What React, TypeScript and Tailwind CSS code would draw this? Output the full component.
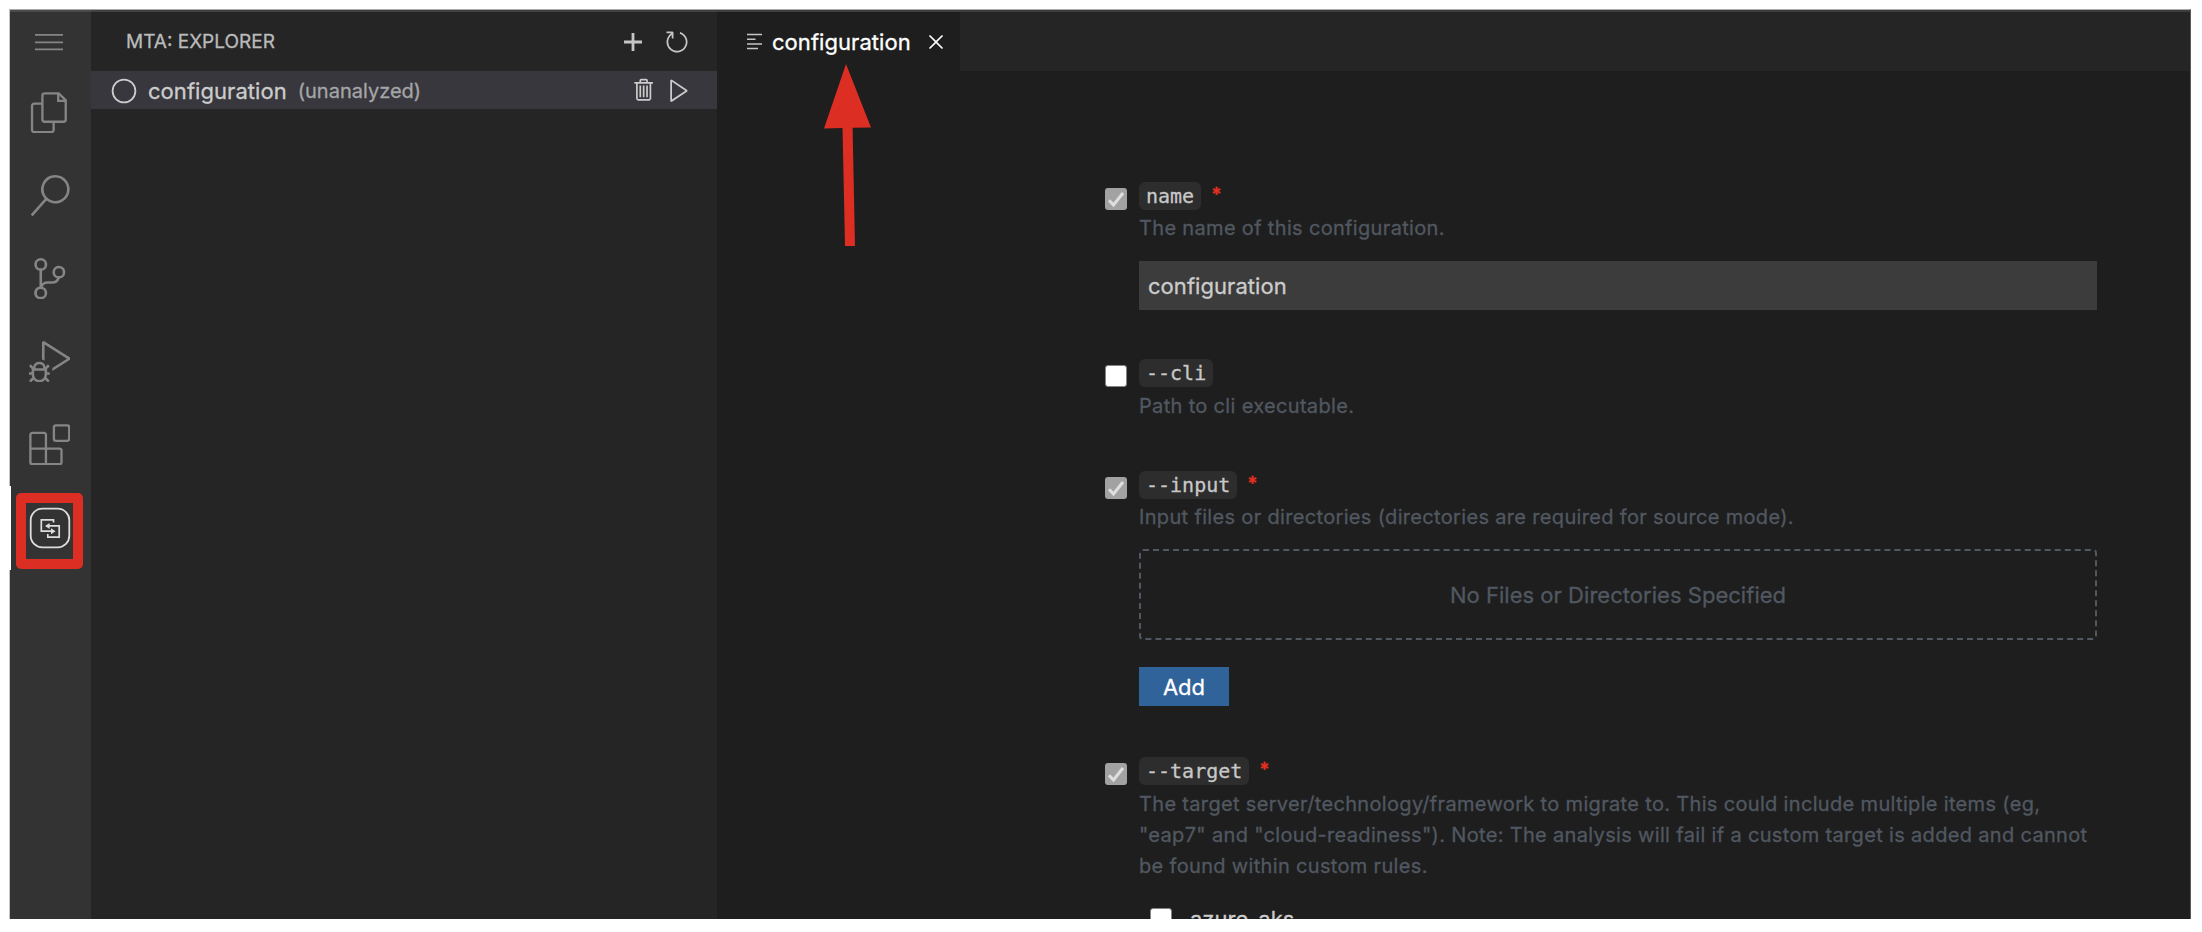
import { ReactNode } from "react";
import { VscClose, VscDebugAlt, VscPlay, VscRefresh, VscSearch, VscSourceControl, VscTrash } from "react-icons/vsc";

function ActivityItem({ children }: { children: ReactNode }) {
  return <div className="flex h-[83px] w-[79px] shrink-0 items-center justify-center text-[#858585]">{children}</div>;
}

function FilesIcon() {
  return (
    <svg className="size-[41.5px]" viewBox="0 0 24 24" fill="none" stroke="currentColor" strokeWidth="1.35">
      <path d="M9 .75H17.2L21.25 4.8V15.9a1.3 1.3 0 0 1-1.3 1.3H9.05a1.3 1.3 0 0 1-1.3-1.3V2.05A1.3 1.3 0 0 1 9.05.75z" />
      <path d="M16.9.75v4.4h4.4" />
      <path d="M7.5 6.75H3.05a1.3 1.3 0 0 0-1.3 1.3V21.95a1.3 1.3 0 0 0 1.3 1.3h9.9a1.3 1.3 0 0 0 1.3-1.3V17.5" />
    </svg>
  );
}

function ExtensionsIcon() {
  return (
    <svg className="size-[41.5px]" viewBox="0 0 24 24" fill="none" stroke="currentColor" strokeWidth="1.35">
      <rect x="14.4" y=".75" width="8.85" height="9" rx="1.2" />
      <path d="M1.9 5.15H8.7a1.1 1.1 0 0 1 1.1 1.1V14.2H17.7a1.1 1.1 0 0 1 1.1 1.1V22.15a1.1 1.1 0 0 1-1.1 1.1H1.9a1.1 1.1 0 0 1-1.1-1.1V6.25a1.1 1.1 0 0 1 1.1-1.1zM.8 14.2H9.8V23.2" />
    </svg>
  );
}

function MtaIcon() {
  return (
    <svg className="size-[42px]" viewBox="0 0 42 42" fill="none" stroke="#dcdcdc">
      <rect x="1.7" y="1.7" width="38.6" height="38.6" rx="11.5" strokeWidth="1.8" />
      <path d="M24.5 15.5V12.8H12.3V24.2H23M19 18.9H30.2V30.2H18.8V27" strokeWidth="1.7" />
      <path d="M16 18.9l4.6-3v6zM26.6 24.2l-4.6-3v6z" fill="#dcdcdc" stroke="none" />
    </svg>
  );
}

function CheckBox({ checked }: { checked?: boolean }) {
  return checked ? (
    <div className="flex size-[22px] shrink-0 items-center justify-center rounded-[3px] bg-[#a2a2a2]">
      <svg className="size-[22px]" viewBox="0 0 22 22" fill="none" stroke="#dfdfdf" strokeWidth="3">
        <path d="M4 12.2L8.5 17 18 5" />
      </svg>
    </div>
  ) : (
    <div className="size-[22px] shrink-0 rounded-[3px] border border-[#858585] bg-white" />
  );
}

function Field({
  label,
  required,
  checked,
  description,
  children,
}: {
  label: string;
  required?: boolean;
  checked?: boolean;
  description: ReactNode;
  children?: ReactNode;
}) {
  return (
    <div className="flex items-start gap-[12px]">
      <div className="pt-[6px]">
        <CheckBox checked={checked} />
      </div>
      <div className="w-[958px]">
        <div className="flex h-[28px] items-start">
          <code className="flex h-[28px] items-center rounded-[6px] bg-[#2d2d2d] px-[7px] font-['DejaVu_Sans_Mono',monospace] text-[20px] leading-[28px] text-[#c8c8c8]">
            {label}
          </code>
          {required && <span className="ml-[10px] text-[19px] leading-[26px] font-semibold text-[#e5301f]">*</span>}
        </div>
        <div className="pt-[3px] text-[20px] leading-[31px] tracking-[0.33px] text-[#515861]">{description}</div>
        {children}
      </div>
    </div>
  );
}

export default function App() {
  return (
    <div className="relative h-[932px] w-[2202px] overflow-hidden bg-white pt-[9px] pl-[9px] font-['Inter',sans-serif] [-webkit-text-stroke:0.3px]">
      <div className="flex h-[910px] w-[2182px] overflow-hidden border-t border-r border-l border-t-[#a9a9a9] border-r-[#5a5a5a] border-l-[#c4c4c4] bg-[#1e1e1e]">
        <nav className="flex w-[81px] shrink-0 flex-col border-t-2 border-[#4a4a4a] bg-[#333333]">
          <div className="flex h-[59px] w-[78px] shrink-0 items-center justify-center">
            <svg className="h-[18px] w-[28px]" viewBox="0 0 28 18" stroke="#858585" strokeWidth="1.7">
              <path d="M0 1.8h28M0 9.3h28M0 16.3h28" />
            </svg>
          </div>
          <ActivityItem><FilesIcon /></ActivityItem>
          <ActivityItem><VscSearch size={41.5} /></ActivityItem>
          <ActivityItem><VscSourceControl size={41.5} /></ActivityItem>
          <ActivityItem><VscDebugAlt size={41.5} /></ActivityItem>
          <ActivityItem><ExtensionsIcon /></ActivityItem>
          <ActivityItem><MtaIcon /></ActivityItem>
        </nav>

        <aside className="w-[626px] shrink-0 border-t-2 border-[#414142] bg-[#252526]">
          <div className="flex h-[59px] items-center pr-[26px] pl-[35px] text-[#bbbbbb]">
            <h2 className="grow pt-[1px] text-[19px] leading-[24px] whitespace-nowrap">MTA: EXPLORER</h2>
            <svg className="mr-[21px] size-[18px]" viewBox="0 0 18 18" fill="none" stroke="#c5c5c5" strokeWidth="2.8">
              <path d="M9 0v18M0 9h18" />
            </svg>
            <VscRefresh color="#c5c5c5" size={28} />
          </div>
          <div className="flex h-[38px] items-center bg-[#37373d] pr-[24px] pl-[20px] text-[#cccccc]">
            <svg className="mt-[1px] mr-[11px] size-[26px]" viewBox="0 0 26 26" fill="none" stroke="#cccccc" strokeWidth="1.8">
              <circle cx="13" cy="13" r="11.4" />
            </svg>
            <span className="pt-[2px] text-[22px] leading-[36px] tracking-[0.05px] whitespace-nowrap">configuration</span>
            <span className="ml-[11px] grow pt-[3px] text-[20px] leading-[35px] whitespace-nowrap text-[#a5a5a7]">
              (unanalyzed)
            </span>
            <VscTrash className="mr-[7px]" size={27} />
            <VscPlay size={28} />
          </div>
        </aside>

        <main className="min-w-0 grow bg-[#1e1e1e]">
          <div className="flex h-[61px] border-t-2 border-[#3d3d3d] bg-[#252526]">
            <div className="flex w-[243px] items-center bg-[#1e1e1e] pl-[30px] text-white">
              <svg className="mr-[10px] h-[18px] w-[15px]" viewBox="0 0 15 18" stroke="#c5c5c5" strokeWidth="1.6">
                <path d="M0 1.5h15M0 6.2h8.5M0 11h15M0 15.5h11" />
              </svg>
              <span className="pt-[1px] text-[22px] leading-[28px] tracking-[0.05px] whitespace-nowrap">configuration</span>
              <VscClose className="ml-[12px]" size={26} />
            </div>
          </div>

          <div className="flex flex-col pt-[111px] pl-[388px]">
            <div className="h-[177px]">
              <Field label="name" required checked description="The name of this configuration.">
                <div className="mt-[17px] flex h-[49px] items-center bg-[#3c3c3c] pt-[2px] pl-[9px] text-[22px] tracking-[0.05px] text-[#cccccc]">
                  configuration
                </div>
              </Field>
            </div>
            <div className="h-[112px]">
              <Field label="--cli" description={<div className="pt-[1px]">Path to cli executable.</div>} />
            </div>
            <div className="h-[286px]">
              <Field
                label="--input"
                required
                checked
                description="Input files or directories (directories are required for source mode)."
              >
                <div className="mt-[16px] flex h-[91px] items-center justify-center rounded-[4px] border-2 border-dashed border-[#515861] pt-[1px] text-[22px] tracking-[0.03px] text-[#515861]">
                  No Files or Directories Specified
                </div>
                <button className="mt-[27px] flex h-[39px] w-[90px] items-center justify-center bg-[#2f639a] pt-[2px] text-[22px] text-white">
                  Add
                </button>
              </Field>
            </div>
            <Field
              label="--target"
              required
              checked
              description={
                <div className="pt-[1px] whitespace-nowrap">
                  <div>The target server/technology/framework to migrate to. This could include multiple items (eg,</div>
                  <div>"eap7" and "cloud-readiness"). Note: The analysis will fail if a custom target is added and cannot</div>
                  <div>be found within custom rules.</div>
                </div>
              }
            >
              <div className="mt-[23px] flex items-start gap-[18px] pl-[11px]">
                <div className="pt-[3px]">
                  <CheckBox />
                </div>
                <span className="text-[22px] leading-[28px] text-[#cccccc]">azure-aks</span>
              </div>
            </Field>
          </div>
        </main>
      </div>

      <div className="absolute top-[486px] left-[9px] h-[84px] w-[2px] bg-white" />
      <div className="absolute top-[493px] left-[16px] h-[76px] w-[67px] rounded-[5px] border-[10px] border-[#dc2e22]" />
      <svg className="absolute top-[64px] left-[823px] h-[183px] w-[48px]" viewBox="0 0 48 183" fill="#dc2e22">
        <path d="M23 0L48 63.5L29.6 63.8L32 182H22L19.5 64L1 64.5z" />
      </svg>
    </div>
  );
}
